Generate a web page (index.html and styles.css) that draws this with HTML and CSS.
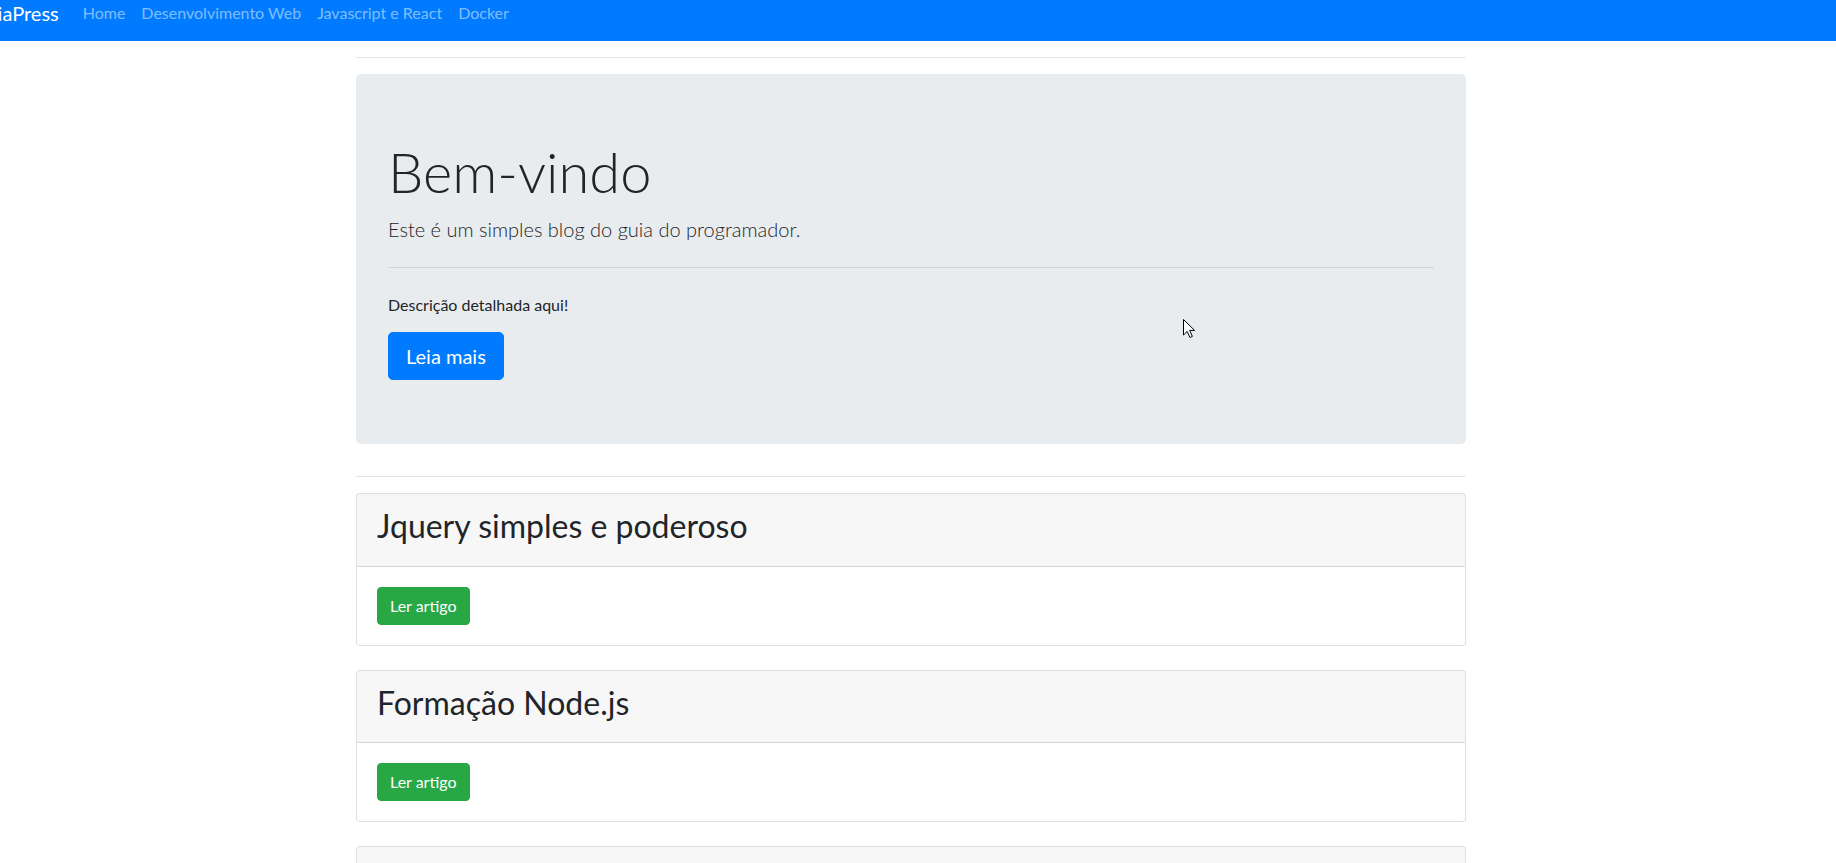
FILE: index.html
```html
<!DOCTYPE html>
<html lang="pt-BR">
<head>
<meta charset="utf-8">
<title>GuiaPress</title>
<link rel="stylesheet" href="styles.css">
</head>
<body>
<nav class="navbar">
  <a class="brand" href="#">GuiaPress</a>
  <ul class="nav-list">
    <li><a class="nav-link" href="#">Home</a></li>
    <li><a class="nav-link" href="#">Desenvolvimento Web</a></li>
    <li><a class="nav-link" href="#">Javascript e React</a></li>
    <li><a class="nav-link" href="#">Docker</a></li>
  </ul>
</nav>
<div class="page">
  <main class="container">
    <hr class="sep">
    <section class="jumbotron">
      <h1 class="display">Bem-vindo</h1>
      <p class="lead">Este é um simples blog do guia do programador.</p>
      <hr class="inner-sep">
      <p class="desc">Descrição detalhada aqui!</p>
      <a class="btn btn-primary btn-lg" href="#">Leia mais</a>
      <svg class="cursor" width="14" height="21" viewBox="0 0 14 21" aria-hidden="true">
        <path d="M1.5 1.5 L1.5 17 L5.2 13.4 L8 19.5 L10.4 18.4 L7.7 12.4 L12.6 12.4 Z" fill="#fff" stroke="#000" stroke-width="1" stroke-linejoin="round"/>
      </svg>
    </section>
    <hr class="sep">
    <article class="card">
      <header class="card-header"><h2>Jquery simples e poderoso</h2></header>
      <div class="card-body"><a class="btn btn-success" href="#">Ler artigo</a></div>
    </article>
    <article class="card">
      <header class="card-header"><h2>Formação Node.js</h2></header>
      <div class="card-body"><a class="btn btn-success" href="#">Ler artigo</a></div>
    </article>
    <article class="card">
      <header class="card-header"><h2>Aprenda Docker</h2></header>
      <div class="card-body"><a class="btn btn-success" href="#">Ler artigo</a></div>
    </article>
  </main>
</div>
</body>
</html>
```
FILE: styles.css
```css
* { box-sizing: border-box; }

html, body {
  margin: 0;
  padding: 0;
  background: #fff;
  overflow: hidden;
}

body {
  font-family: Lato, "Liberation Sans", sans-serif;
  font-size: 16px;
  line-height: 1.5;
  color: #212529;
}

a { text-decoration: none; }

/* navbar (page scrolled down slightly) */
.navbar {
  height: 56px;
  margin-top: -15px;
  background: #007bff;
  display: flex;
  align-items: center;
  padding: 8px 16px 8px 0;
  overflow: hidden;
}

.brand {
  color: #fff;
  font-size: 20px;
  line-height: 30px;
  padding: 5px 0;
  margin-left: -28px;
  margin-right: 16px;
  white-space: nowrap;
}

.nav-list {
  list-style: none;
  margin: 0;
  padding: 0;
  display: flex;
}

.nav-link {
  display: block;
  padding: 8px;
  color: rgba(255, 255, 255, 0.5);
  font-size: 16px;
  line-height: 24px;
  white-space: nowrap;
}

/* layout */
.page {
  padding-right: 14px;
}

.container {
  width: 1110px;
  margin: 0 auto;
}

.sep {
  margin: 16px 0;
  border: 0;
  border-top: 1px solid rgba(0, 0, 0, 0.1);
  height: 0;
}

/* jumbotron */
.jumbotron {
  position: relative;
  background: #e9ecef;
  border-radius: 4.8px;
  padding: 64px 32px;
  margin-bottom: 32px;
}

.display {
  font-size: 56px;
  font-weight: 300;
  line-height: 1.2;
  margin: 0 0 9px;
}

.lead {
  font-size: 20px;
  font-weight: 300;
  line-height: 30px;
  margin: 0;
}

.inner-sep {
  margin: 23px 0 25px;
  border: 0;
  border-top: 1px solid rgba(0, 0, 0, 0.1);
  height: 0;
}

.desc {
  margin: 0 0 15px;
  font-size: 16px;
}

.cursor {
  position: absolute;
  left: 826px;
  top: 244px;
}

/* buttons */
.btn {
  display: inline-block;
  color: #fff;
  border: 1px solid transparent;
  font-weight: 400;
  text-align: center;
  vertical-align: middle;
}

.btn-primary {
  background: #007bff;
  border-color: #007bff;
}

.btn-lg {
  padding: 8px 17px;
  font-size: 20px;
  line-height: 30px;
  border-radius: 4.8px;
}

.btn-success {
  background: #28a745;
  border-color: #28a745;
  padding: 6px 12px;
  font-size: 16px;
  line-height: 24px;
  border-radius: 4px;
}

/* cards */
.card {
  border: 1px solid rgba(0, 0, 0, 0.125);
  border-radius: 4px;
  margin-bottom: 24px;
  background: #fff;
  overflow: hidden;
}

.card-header {
  background: rgba(0, 0, 0, 0.03);
  border-bottom: 1px solid rgba(0, 0, 0, 0.125);
  padding: 13px 20px 12px;
}

.card-header h2 {
  margin: 0 0 8px;
  font-size: 32px;
  font-weight: 400;
  line-height: 1.2;
}

.card-body {
  padding: 20px;
}
```
